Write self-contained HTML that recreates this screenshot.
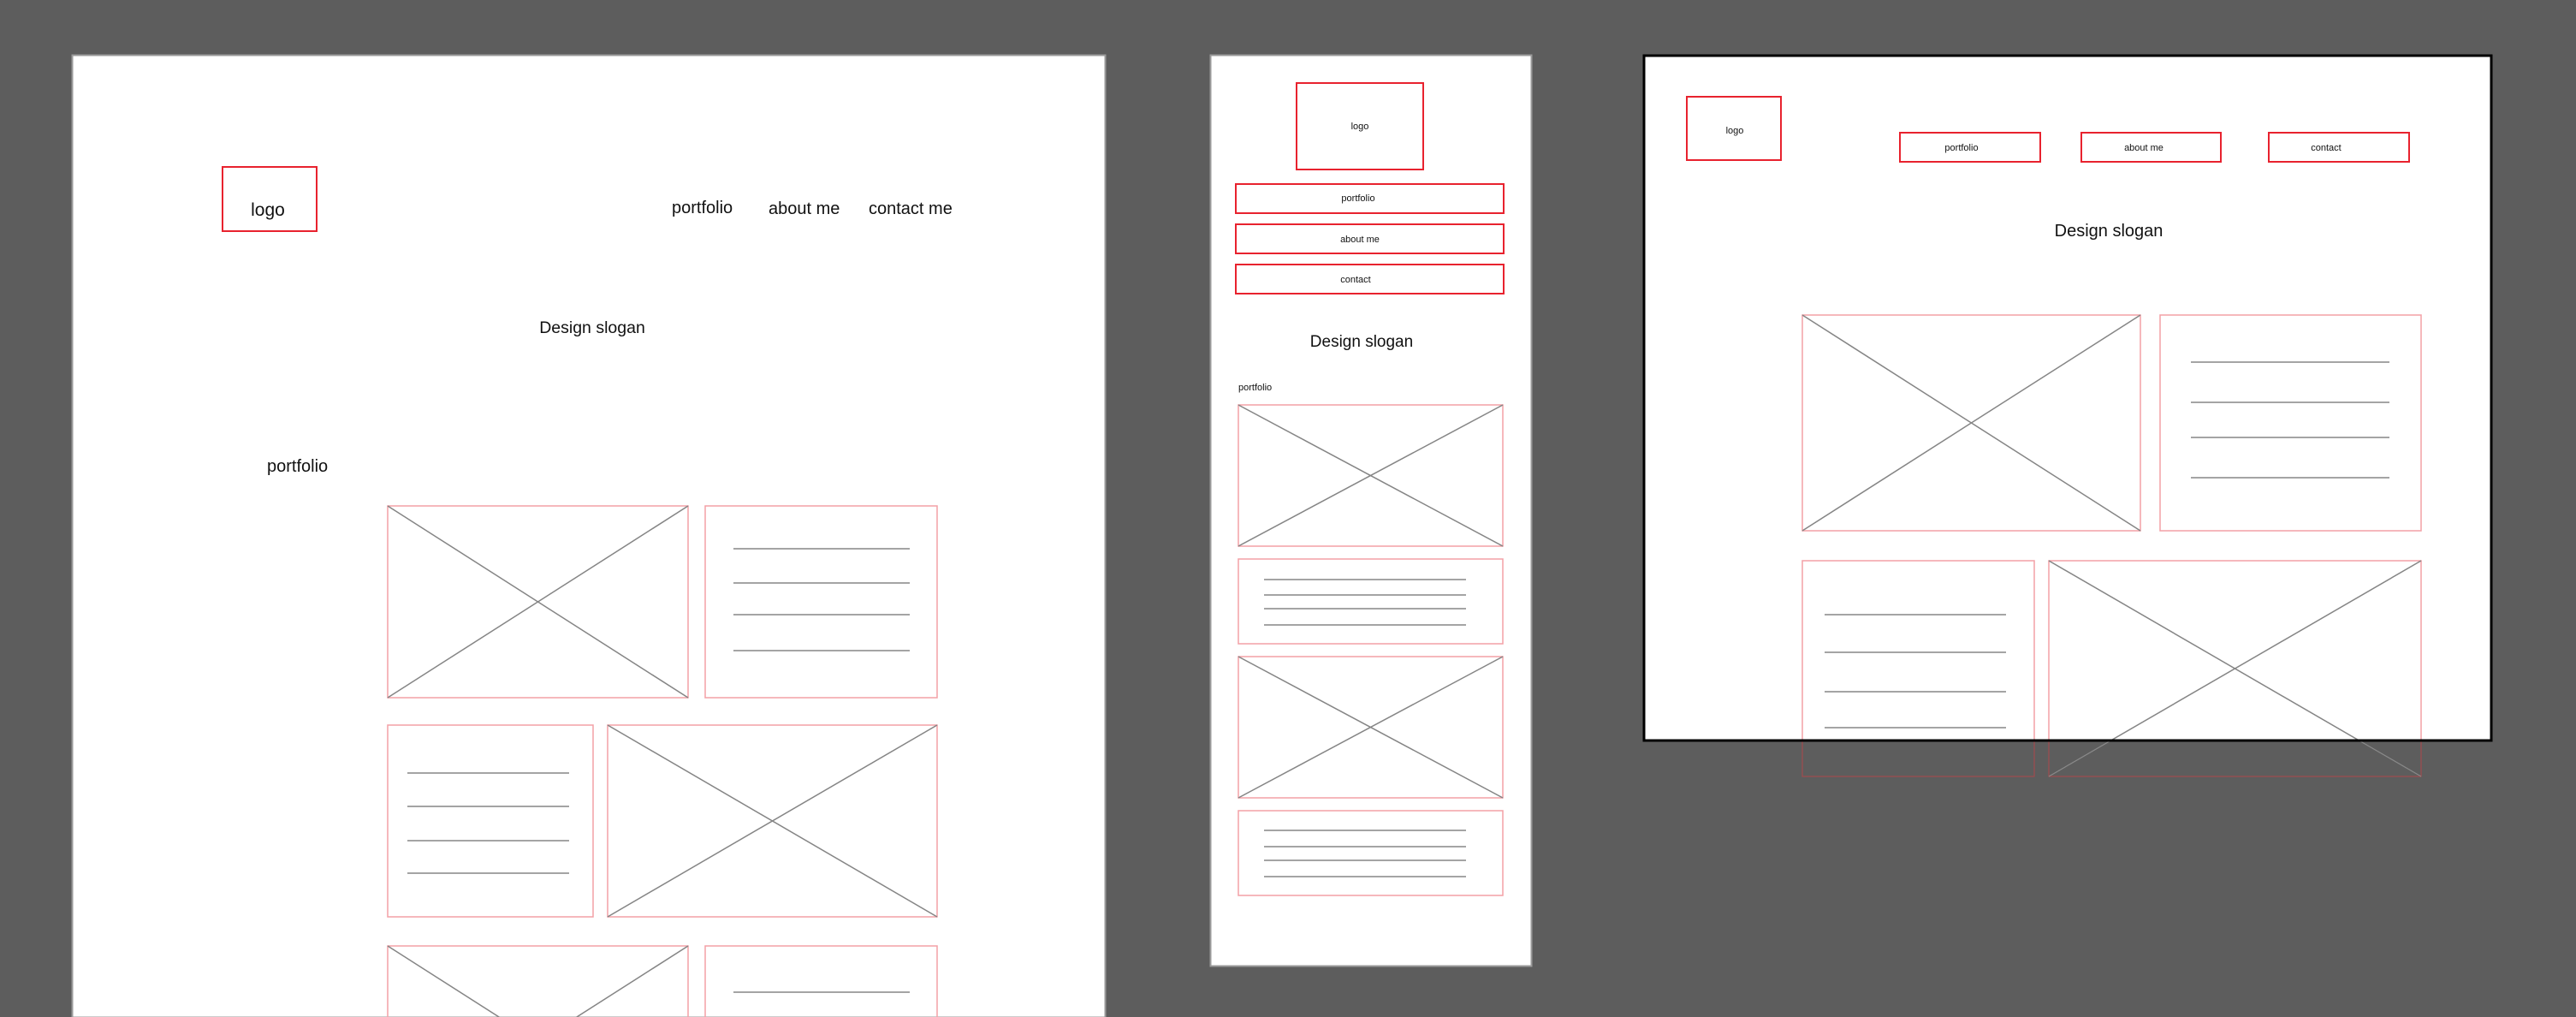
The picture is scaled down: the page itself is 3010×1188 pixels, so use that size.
<!DOCTYPE html>
<html><head><meta charset="utf-8"><style>
html,body{margin:0;padding:0;background:#5d5d5d;width:3010px;height:1188px;overflow:hidden;}
svg{display:block;}
text{font-family:"Liberation Sans",sans-serif;fill:#111;}
</style></head><body>
<svg width="3010" height="1188" viewBox="0 0 3010 1188" xmlns="http://www.w3.org/2000/svg">
<defs>
<clipPath id="ab3"><rect x="1921" y="65" width="990" height="800"/></clipPath>
</defs>
<rect width="3010" height="1188" fill="#5d5d5d"/>

<!-- Artboard 1 -->
<rect x="84.5" y="64.5" width="1207" height="1124" fill="#fff" stroke="#9a9a9a" stroke-width="2"/>
<rect x="260" y="195" width="110" height="75" fill="none" stroke="#e8222e" stroke-width="2"/>
<text x="313" y="252" font-size="21" text-anchor="middle">logo</text>
<text x="785" y="249" font-size="20">portfolio</text>
<text x="898" y="250" font-size="20">about me</text>
<text x="1015" y="250" font-size="20">contact me</text>
<text x="692" y="389" font-size="19.5" text-anchor="middle">Design slogan</text>
<text x="312" y="551" font-size="20">portfolio</text>
<g fill="none" stroke="#f3a0a6" stroke-width="1.5">
<rect x="453" y="591" width="351" height="224"/>
<rect x="824" y="591" width="271" height="224"/>
<rect x="453" y="847" width="240" height="224"/>
<rect x="710" y="847" width="385" height="224"/>
<rect x="453" y="1105" width="351" height="224"/>
<rect x="824" y="1105" width="271" height="224"/>
</g>
<g stroke="#858585" stroke-width="1.5">
<line x1="453" y1="591" x2="804" y2="815"/><line x1="804" y1="591" x2="453" y2="815"/>
<line x1="857" y1="641" x2="1063" y2="641"/><line x1="857" y1="681" x2="1063" y2="681"/>
<line x1="857" y1="718" x2="1063" y2="718"/><line x1="857" y1="760" x2="1063" y2="760"/>
<line x1="476" y1="903" x2="665" y2="903"/><line x1="476" y1="942" x2="665" y2="942"/>
<line x1="476" y1="982" x2="665" y2="982"/><line x1="476" y1="1020" x2="665" y2="1020"/>
<line x1="710" y1="847" x2="1095" y2="1071"/><line x1="1095" y1="847" x2="710" y2="1071"/>
<line x1="453" y1="1105" x2="804" y2="1329"/><line x1="804" y1="1105" x2="453" y2="1329"/>
<line x1="857" y1="1159" x2="1063" y2="1159"/>
</g>

<!-- Artboard 2 (mobile) -->
<rect x="1414.5" y="64.5" width="375" height="1064" fill="#fff" stroke="#9a9a9a" stroke-width="2"/>
<rect x="1515" y="97" width="148" height="101" fill="none" stroke="#e8222e" stroke-width="2"/>
<text x="1589" y="151" font-size="11" text-anchor="middle">logo</text>
<g fill="none" stroke="#e8222e" stroke-width="2">
<rect x="1444" y="215" width="313" height="34"/>
<rect x="1444" y="262" width="313" height="34"/>
<rect x="1444" y="309" width="313" height="34"/>
</g>
<text x="1587" y="235" font-size="11" text-anchor="middle">portfolio</text>
<text x="1589" y="283" font-size="11" text-anchor="middle">about me</text>
<text x="1584" y="330" font-size="11" text-anchor="middle">contact</text>
<text x="1591" y="405" font-size="19" text-anchor="middle">Design slogan</text>
<text x="1447" y="456" font-size="11">portfolio</text>
<g fill="none" stroke="#f3a0a6" stroke-width="1.5">
<rect x="1447" y="473" width="309" height="165"/>
<rect x="1447" y="653" width="309" height="99"/>
<rect x="1447" y="767" width="309" height="165"/>
<rect x="1447" y="947" width="309" height="99"/>
</g>
<g stroke="#858585" stroke-width="1.5">
<line x1="1447" y1="473" x2="1756" y2="638"/><line x1="1756" y1="473" x2="1447" y2="638"/>
<line x1="1477" y1="677" x2="1713" y2="677"/><line x1="1477" y1="695" x2="1713" y2="695"/>
<line x1="1477" y1="711" x2="1713" y2="711"/><line x1="1477" y1="730" x2="1713" y2="730"/>
<line x1="1447" y1="767" x2="1756" y2="932"/><line x1="1756" y1="767" x2="1447" y2="932"/>
<line x1="1477" y1="970" x2="1713" y2="970"/><line x1="1477" y1="989" x2="1713" y2="989"/>
<line x1="1477" y1="1005" x2="1713" y2="1005"/><line x1="1477" y1="1024" x2="1713" y2="1024"/>
</g>

<!-- Artboard 3 overflow (faint, outside) -->
<g fill="none" stroke="#a04a4e" stroke-width="1.2">
<rect x="2106" y="655" width="271" height="252"/>
<rect x="2394" y="655" width="435" height="252"/>
</g>
<g stroke="#8a8a8a" stroke-width="1.2">
<line x1="2394" y1="655" x2="2829" y2="907"/><line x1="2829" y1="655" x2="2394" y2="907"/>
</g>

<!-- Artboard 3 -->
<rect x="1921" y="65" width="990" height="800" fill="#fff" stroke="#000" stroke-width="3"/>
<g clip-path="url(#ab3)">
<rect x="1971" y="113" width="110" height="74" fill="none" stroke="#e8222e" stroke-width="2"/>
<text x="2027" y="156" font-size="11" text-anchor="middle">logo</text>
<g fill="none" stroke="#e8222e" stroke-width="2">
<rect x="2220" y="155" width="164" height="34"/>
<rect x="2432" y="155" width="163" height="34"/>
<rect x="2651" y="155" width="164" height="34"/>
</g>
<text x="2292" y="176" font-size="11" text-anchor="middle">portfolio</text>
<text x="2505" y="176" font-size="11" text-anchor="middle">about me</text>
<text x="2718" y="176" font-size="11" text-anchor="middle">contact</text>
<text x="2464" y="276" font-size="20" text-anchor="middle">Design slogan</text>
<g fill="none" stroke="#f3a0a6" stroke-width="1.5">
<rect x="2106" y="368" width="395" height="252"/>
<rect x="2524" y="368" width="305" height="252"/>
<rect x="2106" y="655" width="271" height="252"/>
<rect x="2394" y="655" width="435" height="252"/>
</g>
<g stroke="#858585" stroke-width="1.5">
<line x1="2106" y1="368" x2="2501" y2="620"/><line x1="2501" y1="368" x2="2106" y2="620"/>
<line x1="2560" y1="423" x2="2792" y2="423"/><line x1="2560" y1="470" x2="2792" y2="470"/>
<line x1="2560" y1="511" x2="2792" y2="511"/><line x1="2560" y1="558" x2="2792" y2="558"/>
<line x1="2132" y1="718" x2="2344" y2="718"/><line x1="2132" y1="762" x2="2344" y2="762"/>
<line x1="2132" y1="808" x2="2344" y2="808"/><line x1="2132" y1="850" x2="2344" y2="850"/>
<line x1="2394" y1="655" x2="2829" y2="907"/><line x1="2829" y1="655" x2="2394" y2="907"/>
</g>
</g>
<rect x="1921" y="65" width="990" height="800" fill="none" stroke="#000" stroke-width="3"/>
</svg>
</body></html>
